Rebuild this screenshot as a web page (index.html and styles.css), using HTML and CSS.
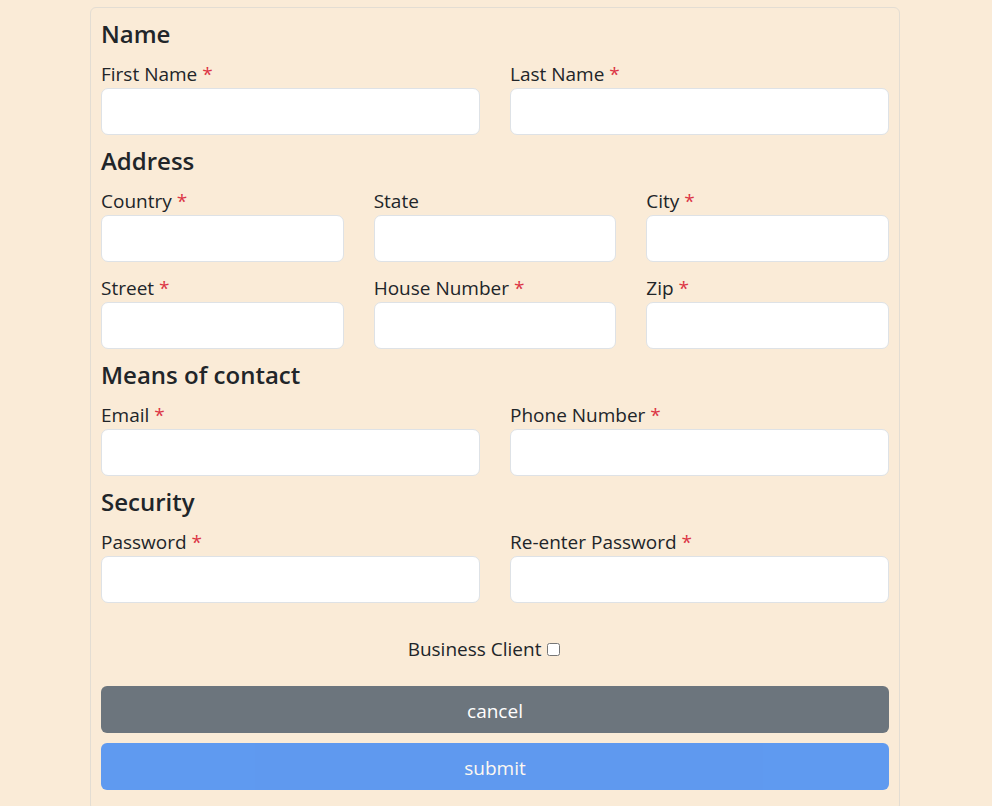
FILE: index.html
```html
<!DOCTYPE html>
<html lang="en">
<head>
<meta charset="utf-8">
<title>Registration</title>
<link rel="stylesheet" href="styles.css">
</head>
<body>
<form class="card">
  <h4 class="section-title">Name</h4>
  <div class="row cols-2">
    <div class="field"><label>First Name <span class="req">*</span></label><input type="text" class="control"></div>
    <div class="field"><label>Last Name <span class="req">*</span></label><input type="text" class="control"></div>
  </div>

  <h4 class="section-title">Address</h4>
  <div class="row cols-3">
    <div class="field"><label>Country <span class="req">*</span></label><input type="text" class="control"></div>
    <div class="field"><label>State</label><input type="text" class="control"></div>
    <div class="field"><label>City <span class="req">*</span></label><input type="text" class="control"></div>
    <div class="field"><label>Street <span class="req">*</span></label><input type="text" class="control"></div>
    <div class="field"><label>House Number <span class="req">*</span></label><input type="text" class="control"></div>
    <div class="field"><label>Zip <span class="req">*</span></label><input type="text" class="control"></div>
  </div>

  <h4 class="section-title">Means of contact</h4>
  <div class="row cols-2">
    <div class="field"><label>Email <span class="req">*</span></label><input type="email" class="control"></div>
    <div class="field"><label>Phone Number <span class="req">*</span></label><input type="text" class="control"></div>
  </div>

  <h4 class="section-title">Security</h4>
  <div class="row cols-2">
    <div class="field"><label>Password <span class="req">*</span></label><input type="password" class="control"></div>
    <div class="field"><label>Re-enter Password <span class="req">*</span></label><input type="password" class="control"></div>
  </div>

  <div class="check-line"><label>Business Client <input type="checkbox" class="check"></label></div>

  <div class="actions">
    <button type="button" class="btn btn-cancel">cancel</button>
    <button type="submit" class="btn btn-submit" disabled>submit</button>
  </div>
</form>
</body>
</html>
```

FILE: styles.css
```css
html, body {
  margin: 0;
  padding: 0;
}
body {
  background: #faebd7;
  font-family: "Open Sans", "Noto Sans", sans-serif;
  color: #212529;
  font-size: 19px;
  line-height: 1.5;
}
.card {
  width: 810px;
  box-sizing: border-box;
  margin: 7px 0 0 90px;
  border: 1px solid #e3ddd3;
  border-radius: 6px;
  padding: 11px 10px 20px;
}
.section-title {
  font-size: 24px;
  font-weight: 600;
  line-height: 29px;
  margin: 11px 0 14px;
}
.section-title:first-child {
  margin-top: 0;
}
.row {
  display: grid;
  column-gap: 30px;
  row-gap: 14px;
}
.cols-2 { grid-template-columns: repeat(2, minmax(0, 1fr)); }
.cols-3 { grid-template-columns: repeat(3, minmax(0, 1fr)); }
.field {
  display: flex;
  flex-direction: column;
  gap: 2px;
  min-width: 0;
}
.field label {
  line-height: 24px;
}
.req {
  color: #dc3545;
}
.control {
  width: 100%;
  min-width: 0;
  height: 47px;
  box-sizing: border-box;
  border: 1px solid #dee2e6;
  border-radius: 7px;
  background: #fff;
  padding: 8px 16px;
  font: inherit;
}
.check-line {
  text-align: center;
  margin-top: 34px;
  padding-right: 22px;
  line-height: 24px;
}
.check {
  margin: 0 0 0 1px;
  width: 13px;
  height: 13px;
  vertical-align: 0;
}
.actions {
  display: flex;
  flex-direction: column;
  gap: 10px;
  margin-top: 25px;
}
.btn {
  height: 47px;
  border: none;
  border-radius: 6px;
  padding: 3px 16px 0;
  color: #fff;
  font-family: inherit;
  font-size: 19px;
  line-height: 1.5;
}
.btn-cancel {
  background: #6c757d;
}
.btn-submit {
  background: #0d6efd;
  opacity: 0.65;
}
```
